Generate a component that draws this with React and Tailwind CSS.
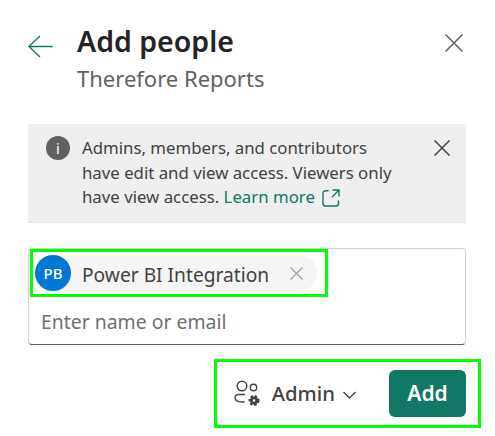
function CloseIcon({ size, color, width = 1.5, className = "" }) {
  return (
    <svg width={size} height={size} viewBox={`0 0 ${size} ${size}`} fill="none" stroke={color} strokeWidth={width} className={`shrink-0 ${className}`}>
      <path d={`M0.5 0.5L${size - 0.5} ${size - 0.5}M${size - 0.5} 0.5L0.5 ${size - 0.5}`} />
    </svg>
  );
}

function RoleIcon() {
  return (
    <svg width="27" height="27" viewBox="0 0 27 27" fill="none" stroke="#424242" strokeWidth="1.4">
      <circle cx="8" cy="6" r="4.8" />
      <circle cx="19.5" cy="7.5" r="3.2" />
      <path d="M11 14.5H5C2.8 14.5 1 15.8 1 17.6C1 20.4 3.6 22 8 22H10.5" />
      <circle cx="20" cy="20.5" r="4" fill="#424242" stroke="#424242" strokeWidth="3" strokeDasharray="2.2 1.6" />
      <circle cx="20" cy="20.5" r="1.3" fill="#fff" stroke="none" />
    </svg>
  );
}

function ExternalIcon() {
  return (
    <svg width="18" height="18" viewBox="0 0 18 18" fill="none" stroke="#117865" strokeWidth="1.4" className="ml-[3px] inline-block align-[-4px]">
      <path d="M6.5 1.7H3.5C2.2 1.7 1 2.8 1 4.2V14.5C1 15.9 2.2 17 3.5 17H14C15.4 17 16.5 15.9 16.5 14.5V11.5" />
      <path d="M10.5 1H17V7.5M17 1L10 8" />
    </svg>
  );
}

export default function App() {
  return (
    <div className="relative h-[436px] w-[495px] overflow-hidden bg-white font-['Noto_Sans',sans-serif]">
      <div className="pt-[23px] pr-[29px] pl-7">
        <div className="flex items-start">
          <svg width="25" height="23" viewBox="0 0 25 23" fill="none" stroke="#117865" strokeWidth="1.4" className="mt-[12px] shrink-0">
            <path d="M24.5 11.5H1M12 1L1 11.5L12 22" />
          </svg>
          <div className="ml-[24px] flex-1">
            <div className="text-[28.5px] leading-[36px] font-semibold text-[#242424]">Add people</div>
            <div className="mt-[6px] text-[22px] leading-[27px] text-[#616161]">Therefore Reports</div>
          </div>
          <CloseIcon size={18} color="#616161" className="mt-[11px] mr-[3px]" />
        </div>

        <div className="mt-[32px] flex h-[99px] items-start border-b border-[#e5e5e5] bg-[#efefef] pt-[12px] pr-[16px] pl-[18px]">
          <div className="flex h-6 w-6 shrink-0 items-center justify-center rounded-full bg-[#616161] text-[14px] font-medium text-[#efefef]">i</div>
          <p className="ml-[12px] flex-1 text-[16.8px] leading-[24.5px] text-[#424242]">
            Admins, members, and contributors<br />
            have edit and view access. Viewers only<br />
            have view access. <span className="text-[#117865]">Learn more</span> <ExternalIcon />
          </p>
          <CloseIcon size={16} color="#424242" className="mt-[4px]" />
        </div>

        <div className="mt-[25px] h-[97px] rounded-[4px] border border-[#d1d1d1] border-b-[#616161] pt-[6px] pl-[6px]">
          <div className="flex h-9 w-[282px] items-center rounded-full bg-[#f5f5f5]">
            <div className="flex h-9 w-9 shrink-0 items-center justify-center rounded-full bg-[#0078d4] text-[15px] font-medium text-white">PB</div>
            <span className="mt-[4px] ml-[11px] text-[19.2px] text-[#424242]">Power BI Integration</span>
            <CloseIcon size={13} color="#a0a0a0" width={1.2} className="ml-[21px]" />
          </div>
          <div className="mt-[17px] ml-[6px] text-[19.4px] leading-[28px] text-[#707070]">Enter name or email</div>
        </div>

        <div className="mt-[25px] flex items-center justify-end">
          <RoleIcon />
          <span className="ml-[11px] text-[20.3px] font-medium text-[#424242]">Admin</span>
          <svg width="13" height="8" viewBox="0 0 13 8" fill="none" stroke="#424242" strokeWidth="1.4" className="mt-[2px] ml-[8px]">
            <path d="M0.5 1L6.5 7L12.5 1" />
          </svg>
          <button className="ml-[33px] flex h-[47px] w-[77px] items-center justify-center rounded-[6px] bg-[#117865] text-[21px] font-semibold text-white">Add</button>
        </div>
      </div>

      <div className="absolute top-[249px] left-[30px] h-[48px] w-[298px] border-[3px] border-[#00ff00]" />
      <div className="absolute top-[359px] left-[214px] h-[69px] w-[267px] border-[3px] border-[#00ff00]" />
    </div>
  );
}
